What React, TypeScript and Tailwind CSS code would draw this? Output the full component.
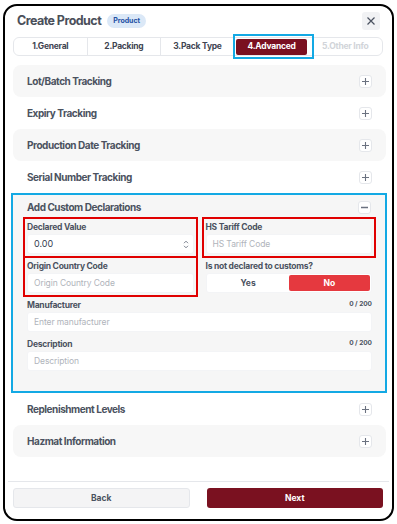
import type { ReactNode } from "react";

const rows = ["Lot/Batch Tracking", "Expiry Tracking", "Production Date Tracking", "Serial Number Tracking"];
const tabs = ["1.General", "2.Packing", "3.Pack Type", "4.Advanced", "5.Other Info"];

function PlusBox() {
  return (
    <span className="flex h-[13px] w-[13px] items-center justify-center rounded-[3px] border border-gray-200 bg-white">
      <svg width="9" height="9" viewBox="0 0 9 9" fill="none" stroke="#6b7280" strokeWidth="1.1">
        <path d="M4.5 1v7M1 4.5h7" />
      </svg>
    </span>
  );
}

function MinusBox() {
  return (
    <span className="flex h-[13px] w-[13px] items-center justify-center rounded-[3px] border border-gray-200 bg-white">
      <svg width="9" height="9" viewBox="0 0 9 9" fill="none" stroke="#6b7280" strokeWidth="1.3">
        <path d="M1 4.5h7" />
      </svg>
    </span>
  );
}

function AccordionRow({ title, shaded }: { title: string; shaded: boolean }) {
  return (
    <div
      className={`flex h-8 items-center justify-between rounded-lg pl-[14px] pr-[14px] ${
        shaded ? "bg-[#f7f7f7]" : "bg-white"
      }`}
    >
      <span className="text-[10px] font-bold tracking-[-0.45px] text-[#4b5260]">{title}</span>
      <PlusBox />
    </div>
  );
}

function Marked({ children }: { children: ReactNode }) {
  return (
    <div className="relative">
      {children}
      <span className="pointer-events-none absolute -top-[4px] -bottom-[4px] -left-[4px] -right-[4px] border-2 border-[#e00000]" />
    </div>
  );
}

function Field({ label, placeholder, value }: { label: string; placeholder: string; value?: string }) {
  return (
    <div className="flex flex-col">
      <span className="flex h-3 items-center text-[8.5px] font-bold tracking-[-0.25px] text-[#4b5260]">{label}</span>
      <div className="mt-[1px] flex h-5 items-center justify-between rounded-[3px] border border-gray-100 bg-white pl-[6px] pr-[4px]">
        {value ? (
          <span className="text-[9px] text-[#374151]">{value}</span>
        ) : (
          <span className="text-[8.5px] tracking-[-0.1px] text-[#b0b4bb]">{placeholder}</span>
        )}
        {value && (
          <span className="flex flex-col items-center">
            <svg width="6" height="4" viewBox="0 0 6 4" fill="none" stroke="#6b7280" strokeWidth="0.9">
              <path d="M1 3.2L3 1.2L5 3.2" />
            </svg>
            <svg width="6" height="4" viewBox="0 0 6 4" fill="none" stroke="#6b7280" strokeWidth="0.9" className="mt-[1px]">
              <path d="M1 0.8L3 2.8L5 0.8" />
            </svg>
          </span>
        )}
      </div>
    </div>
  );
}

function CountedField({ label, placeholder }: { label: string; placeholder: string }) {
  return (
    <div className="flex flex-col">
      <div className="flex h-3 items-center justify-between">
        <span className="text-[8.5px] font-bold tracking-[-0.25px] text-[#4b5260]">{label}</span>
        <span className="text-[6.5px] font-bold text-[#4b5260]">0 / 200</span>
      </div>
      <div className="mt-[1px] flex h-5 items-center rounded-[3px] border border-gray-100 bg-white pl-[6px]">
        <span className="text-[8.5px] tracking-[-0.1px] text-[#b0b4bb]">{placeholder}</span>
      </div>
    </div>
  );
}

export default function App() {
  return (
    <div className="h-[524px] w-[397px] bg-white pl-[3px] pt-[4px]" style={{ fontFamily: "Inter, 'Noto Sans', sans-serif" }}>
      <div className="flex h-[517px] w-[391px] flex-col overflow-hidden rounded-[14px] border-2 border-black">
        <div className="mt-[6px] flex h-[18px] items-center justify-between pl-[12px] pr-[12px]">
          <div className="flex items-center gap-[6px]">
            <span className="text-[12.5px] font-bold tracking-[-0.55px] text-[#4a4f5a]">Create Product</span>
            <span className="rounded-full bg-[#dbe8f7] px-[6px] py-[2px] text-[7px] font-bold text-[#1d4fa3]">Product</span>
          </div>
          <button className="flex h-[18px] w-[18px] items-center justify-center rounded-[3px] bg-[#f1f2f4]">
            <svg width="10" height="10" viewBox="0 0 10 10" fill="none" stroke="#4b5260" strokeWidth="1.2">
              <path d="M1.5 1.5l7 7M8.5 1.5l-7 7" />
            </svg>
          </button>
        </div>

        <div className="relative ml-2 mr-[9px] mt-[7px] grid h-[19px] grid-cols-5 rounded-md border border-gray-200">
          {tabs.map((t, i) => (
            <div
              key={t}
              className={`flex items-center justify-center text-[8.5px] font-bold tracking-[-0.25px] ${
                i < 3 ? "border-r border-gray-200" : ""
              } ${i === 4 ? "text-[#d1d4d9]" : "text-[#3f4552]"}`}
            >
              {i === 3 ? (
                <span className="mx-[1px] flex h-[16px] w-full items-center justify-center rounded-[2px] bg-[#7a1020] text-white">
                  {t}
                </span>
              ) : (
                t
              )}
            </div>
          ))}
          <span className="pointer-events-none absolute -top-[4px] -bottom-[4px] left-[219px] w-[81px] border-2 border-[#13a9e4]" />
        </div>

        <div className="ml-2 mr-[6px] mt-[9px] flex flex-col">
          {rows.map((r, i) => (
            <AccordionRow key={r} title={r} shaded={i % 2 === 0} />
          ))}

          <div className="-ml-[2px] -mr-[1px] flex h-[200px] flex-col border-2 border-[#13a9e4] bg-[#f6f6f6] pl-[14px] pr-[13px]">
            <div className="flex h-[25px] items-center justify-between pr-[1px]">
              <span className="text-[10px] font-bold tracking-[-0.45px] text-[#4b5260]">Add Custom Declarations</span>
              <MinusBox />
            </div>
            <div className="mt-[1px] grid grid-cols-2 gap-x-3 gap-y-[6px]">
              <Marked>
                <Field label="Declared Value" placeholder="" value="0.00" />
              </Marked>
              <Marked>
                <Field label="HS Tariff Code" placeholder="HS Tariff Code" />
              </Marked>
              <Marked>
                <Field label="Origin Country Code" placeholder="Origin Country Code" />
              </Marked>
              <div className="flex flex-col">
                <span className="flex h-3 items-center text-[8.5px] font-bold tracking-[-0.25px] text-[#4b5260]">Is not declared to customs?</span>
                <div className="mt-[1px] grid h-5 grid-cols-2 rounded-[3px] border border-gray-100 bg-white p-[1px]">
                  <span className="flex items-center justify-center text-[8.5px] font-bold text-[#4b5260]">Yes</span>
                  <span className="flex items-center justify-center rounded-[2px] bg-[#e5393f] text-[8.5px] font-bold text-white">No</span>
                </div>
              </div>
            </div>
            <div className="mt-[6px] flex flex-col gap-[6px]">
              <CountedField label="Manufacturer" placeholder="Enter manufacturer" />
              <CountedField label="Description" placeholder="Description" />
            </div>
          </div>

          <AccordionRow title="Replenishment Levels" shaded={false} />
          <AccordionRow title="Hazmat Information" shaded={true} />
        </div>

        <div className="mx-[3px] mt-auto grid grid-cols-2 gap-[17px] border-t border-gray-200 pb-[11px] pl-[5px] pr-[6px] pt-[6px]">
          <button className="h-5 rounded-[3px] border border-gray-200 bg-[#f4f4f5] text-[8.5px] font-bold text-[#4b5260]">Back</button>
          <button className="h-5 rounded-[3px] bg-[#7a1120] text-[8.5px] font-bold text-white">Next</button>
        </div>
      </div>
    </div>
  );
}
